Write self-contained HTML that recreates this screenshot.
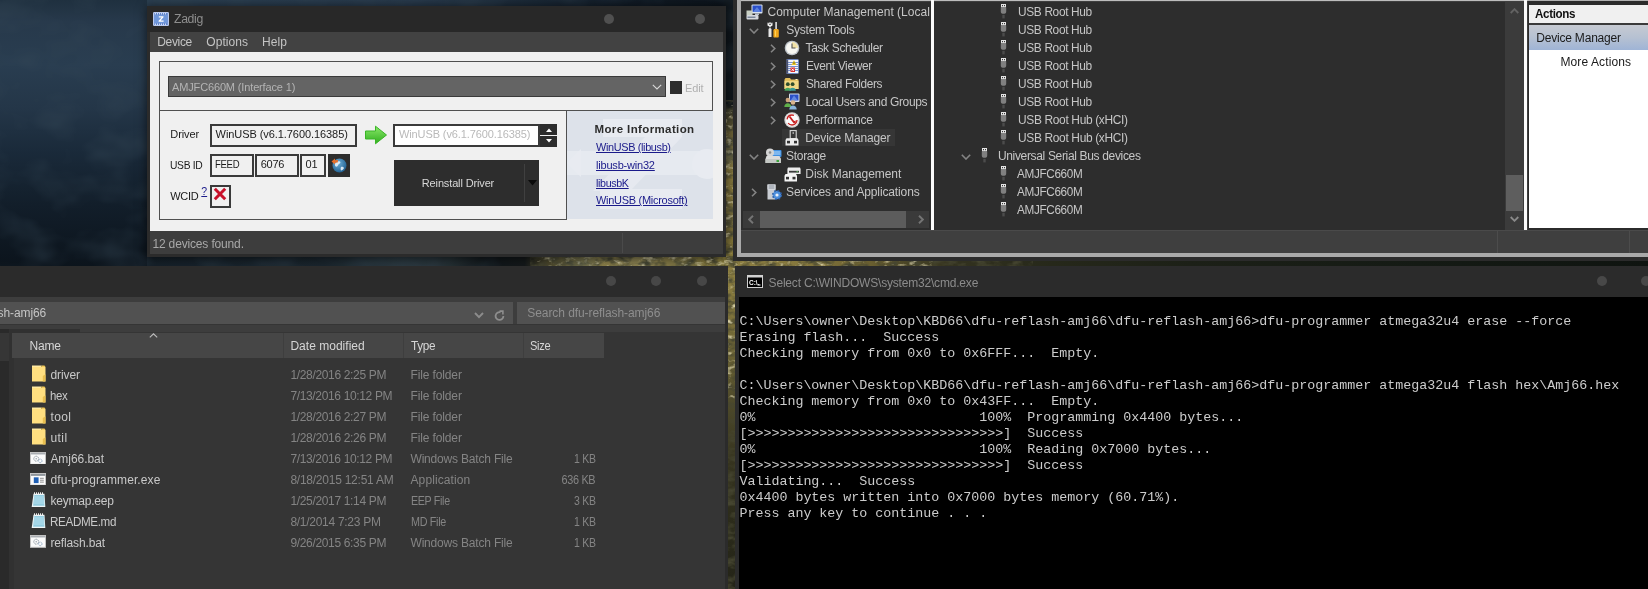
<!DOCTYPE html>
<html>
<head>
<meta charset="utf-8">
<title>Desktop</title>
<style>
*{box-sizing:border-box;margin:0;padding:0}
html,body{width:1648px;height:589px;overflow:hidden;background:#14191c}
body{position:relative;font-family:"Liberation Sans",sans-serif;font-size:12px;color:#ccc}
.a{position:absolute}
.t{position:absolute;white-space:nowrap;line-height:16px;height:16px}
/* ---------- wallpaper ---------- */
#wp-blue{left:0;top:0;width:740px;height:270px;background:linear-gradient(180deg,#1f303f 0%,#27394b 8%,#293d50 24%,#243648 40%,#1a2a3a 56%,#121e2a 76%,#0b131b 100%)}
#wp-topstrip{left:147px;top:0;width:600px;height:8px;background:linear-gradient(90deg,#2a3e50 0%,#27394b 45%,#1a2836 65%,#111b26 80%,#0c131a 100%)}
#wp-mid{left:147px;top:256px;width:590px;height:11px;background:linear-gradient(90deg,#152029 0%,#1a252d 30%,#2a383f 42%,#222c30 52%,#10161a 58%,#14181a 64%,#4a4528 68%,#857a44 74%,#8f8450 84%,#7a703c 92%,#90843f 100%)}
#wp-v1{left:724px;top:0;width:12px;height:270px;background:linear-gradient(180deg,#0e151b 0%,#0f161b 38%,#5f5630 46%,#8a7c40 60%,#7a6d36 85%,#95873f 100%)}
#wp-v2{left:726px;top:266px;width:12px;height:323px;background:linear-gradient(180deg,#8f8142 0%,#85783d 10%,#6e6535 26%,#4e4a2a 42%,#36341f 60%,#2a2a1a 82%,#242418 100%)}
#wp-r{left:733px;top:259px;width:915px;height:9px;background:linear-gradient(90deg,#8d7f42 0%,#84763c 8%,#6a5f30 15%,#4a4526 19%,#33321f 24%,#26281a 35%,#1c2017 50%,#141a14 75%,#0f1410 100%)}
.nzo{filter:url(#nzd);background:#000}
.nzo2{filter:url(#nzl);background:#000}
.nzo3{filter:url(#nzb);background:#000}
</style>
</head>
<body>
<div id="root" class="a" style="left:0;top:0;width:1648px;height:589px;will-change:transform">
<!-- wallpaper pieces -->
<svg id="nz" class="a" width="0" height="0" style="left:0;top:0"><defs>
<filter id="nzd" x="0" y="0" width="100%" height="100%"><feTurbulence type="fractalNoise" baseFrequency="0.09 0.16" numOctaves="3" seed="7"/><feColorMatrix type="matrix" values="0 0 0 0 0.060  0 0 0 0 0.060  0 0 0 0 0.030  2.600 0 0 0 -1.050"/></filter>
<filter id="nzl" x="0" y="0" width="100%" height="100%"><feTurbulence type="fractalNoise" baseFrequency="0.12 0.200" numOctaves="3" seed="21"/><feColorMatrix type="matrix" values="0 0 0 0 0.860  0 0 0 0 0.800  0 0 0 0 0.520  0 2.800 0 0 -1.550"/></filter>
<filter id="nzb" x="0" y="0" width="100%" height="100%"><feTurbulence type="fractalNoise" baseFrequency="0.020 0.030" numOctaves="3" seed="4"/><feColorMatrix type="matrix" values="0 0 0 0 0.040  0 0 0 0 0.070  0 0 0 0 0.100  0.800 0 0 0 -0.340"/></filter>
</defs></svg>

<div class="a" id="wp-blue"></div>
<div class="a" id="wp-topstrip"></div>
<div class="a" id="wp-mid"></div>
<div class="a" id="wp-v1"></div>
<div class="a" id="wp-v2"></div>
<div class="a" id="wp-r"></div>
<div class="a nzo" style="left:530px;top:256px;width:210px;height:12px"></div>
<div class="a nzo" style="left:724px;top:100px;width:14px;height:489px"></div>
<div class="a nzo" style="left:733px;top:258px;width:300px;height:10px"></div>
<div class="a nzo2" style="left:530px;top:256px;width:210px;height:12px"></div>
<div class="a nzo2" style="left:724px;top:100px;width:14px;height:300px"></div>
<div class="a nzo2" style="left:733px;top:258px;width:200px;height:10px"></div>
<div class="a nzo3" style="left:0;top:0;width:740px;height:270px"></div>


<div class="a" style="left:147px;top:6px;width:579px;height:250.5px;background:#2b2b2b;box-shadow:0 1px 9px 1px rgba(0,0,0,.55);"></div>
<div class="a" style="left:147px;top:6px;width:579px;height:26px;background:#282828;"></div>
<svg class="a" style="left:153px;top:12px" width="16" height="14" viewBox="0 0 16 14">
<rect x="0" y="0" width="16" height="14" rx="1.200" fill="#b9c9ee"/>
<rect x="1.300" y="1" width="13.400" height="12" fill="#5f84cc"/>
<path d="M2 1.800h12M2 12.200h12" stroke="#cfdcf6" stroke-width="1.600" stroke-dasharray="1 1"/>
<rect x="1.300" y="3" width="13.400" height="8" fill="#6f97da"/>
<path d="M5.800 4.300h4.700v1L7.600 8.500h3v1.200H5.600v-1L8.600 5.500H5.800z" fill="#fff"/>
</svg>
<span class="t" style="transform-origin:0 50%;top:11.2px;font-size:12.5px;color:#8e8e8e;line-height:16px;height:16px;left:174px;letter-spacing:-0.350px;transform:scaleX(0.9805);">Zadig</span>
<div class="a" style="left:604px;top:14px;width:10px;height:10px;background:#505050;border-radius:50%;"></div>
<div class="a" style="left:695px;top:14px;width:10px;height:10px;background:#505050;border-radius:50%;"></div>
<div class="a" style="left:150px;top:32px;width:573px;height:19.5px;background:#424242;"></div>
<span class="t" style="transform-origin:0 50%;top:33.8px;font-size:12px;color:#c4c4c4;line-height:16px;height:16px;left:157.2px;letter-spacing:-0.317px;">Device</span>
<span class="t" style="transform-origin:0 50%;top:33.8px;font-size:12px;color:#c4c4c4;line-height:16px;height:16px;left:206.3px;letter-spacing:0.057px;">Options</span>
<span class="t" style="transform-origin:0 50%;top:33.8px;font-size:12px;color:#c4c4c4;line-height:16px;height:16px;left:262px;letter-spacing:0.104px;">Help</span>
<div class="a" style="left:150px;top:51.5px;width:573px;height:179.5px;background:#f0f0f0;"></div>
<div class="a" style="left:159px;top:61px;width:554px;height:50px;border:1px solid #505050;"></div>
<div class="a" style="left:168px;top:76px;width:498px;height:21px;background:#646464;border:1px solid #3a3a3a;"></div>
<span class="t" style="transform-origin:0 50%;top:79.0px;font-size:11px;color:#b4b4b4;line-height:16px;height:16px;left:172px;letter-spacing:-0.143px;">AMJFC660M (Interface 1)</span>
<svg class="a" style="left:652px;top:84px" width="10" height="6" viewBox="0 0 10 6"><path d="M0.800 0.800l4.200 4.200 4.200-4.200" fill="none" stroke="#d8d8d8" stroke-width="1.100"/></svg>
<div class="a" style="left:669.5px;top:81px;width:12.5px;height:12.5px;background:#2d2d2d;"></div>
<span class="t" style="transform-origin:0 50%;top:80.0px;font-size:11px;color:#b0b0b0;line-height:16px;height:16px;left:685px;letter-spacing:-0.156px;">Edit</span>
<div class="a" style="left:159px;top:110px;width:408px;height:109.8px;border:1px solid #505050;"></div>
<div class="a" style="left:567px;top:111px;width:146px;height:108.3px;background:#dde2ea;overflow:hidden;"><svg width="146" height="107" viewBox="0 0 146 107" style="position:absolute;left:0;top:0">
<g fill="#e8ebf1">
<rect x="36" y="8" width="79" height="18"/>
<path d="M78 26h37l-52 54h-37z" opacity="0.800"/>
<rect x="33" y="78" width="82" height="20"/>
<rect x="0" y="40" width="146" height="24" opacity="0.850"/>
<path d="M0 52l14-14v28z"/>
<circle cx="140" cy="53" r="15"/>
</g></svg></div>
<span class="t" style="transform-origin:0 50%;top:121.0px;font-size:11.5px;color:#2c2c2c;line-height:16px;height:16px;left:594.5px;font-weight:bold;letter-spacing:0.379px;">More Information</span>
<span class="t" style="transform-origin:0 50%;top:139.0px;font-size:11px;color:#1a1a8a;line-height:16px;height:16px;left:596px;text-decoration:underline;letter-spacing:-0.350px;transform:scaleX(0.9896);">WinUSB (libusb)</span>
<span class="t" style="transform-origin:0 50%;top:157.2px;font-size:11px;color:#1a1a8a;line-height:16px;height:16px;left:596px;text-decoration:underline;letter-spacing:-0.196px;">libusb-win32</span>
<span class="t" style="transform-origin:0 50%;top:175.4px;font-size:11px;color:#1a1a8a;line-height:16px;height:16px;left:596px;text-decoration:underline;letter-spacing:-0.350px;transform:scaleX(0.9712);">libusbK</span>
<span class="t" style="transform-origin:0 50%;top:192.4px;font-size:11px;color:#1a1a8a;line-height:16px;height:16px;left:596px;text-decoration:underline;letter-spacing:-0.286px;">WinUSB (Microsoft)</span>
<span class="t" style="transform-origin:0 50%;top:126.0px;font-size:11px;color:#1a1a1a;line-height:16px;height:16px;left:170.3px;letter-spacing:-0.089px;">Driver</span>
<div class="a" style="left:210px;top:124px;width:147px;height:22.7px;background:#f0f0f0;border:2px solid #3a3a3a;"></div>
<span class="t" style="transform-origin:0 50%;top:125.8px;font-size:11px;color:#1a1a1a;line-height:16px;height:16px;left:215.6px;letter-spacing:-0.071px;">WinUSB (v6.1.7600.16385)</span>
<svg class="a" style="left:364px;top:125.400px" width="24" height="20" viewBox="0 0 24 20">
<defs><linearGradient id="ga" x1="0" y1="0" x2="0" y2="1"><stop offset="0" stop-color="#8be86a"/><stop offset="1" stop-color="#2faf1e"/></linearGradient></defs>
<path d="M1.5 6h10V1.2L22.5 10 11.5 18.8V14h-10z" fill="url(#ga)" stroke="#39b526" stroke-width="1"/></svg>
<div class="a" style="left:393px;top:124px;width:146.5px;height:22.7px;background:#ffffff;border:2px solid #3a3a3a;"></div>
<span class="t" style="transform-origin:0 50%;top:125.8px;font-size:11px;color:#b9b9b9;line-height:16px;height:16px;left:399px;letter-spacing:-0.110px;">WinUSB (v6.1.7600.16385)</span>
<div class="a" style="left:539.5px;top:124px;width:17.7px;height:22.7px;background:#2d2d2d;"></div>
<div class="a" style="left:539.5px;top:135px;width:18px;height:1px;background:#f0f0f0;"></div>
<svg class="a" style="left:544.5px;top:128px" width="8" height="15" viewBox="0 0 8 15"><path d="M4 0.5L7 4H1z M1 11h6L4 14.5z" fill="#fff"/></svg>
<span class="t" style="transform-origin:0 50%;top:157.0px;font-size:11px;color:#1a1a1a;line-height:16px;height:16px;left:170.3px;letter-spacing:-0.350px;transform:scaleX(0.9360);">USB ID</span>
<div class="a" style="left:210px;top:154px;width:43.5px;height:22.5px;background:#f0f0f0;border:2px solid #3a3a3a;"></div>
<span class="t" style="transform-origin:0 50%;top:156.2px;font-size:11px;color:#1a1a1a;line-height:16px;height:16px;left:215px;letter-spacing:-0.350px;transform:scaleX(0.8694);">FEED</span>
<div class="a" style="left:255px;top:154px;width:43.5px;height:22.5px;background:#f0f0f0;border:2px solid #3a3a3a;"></div>
<span class="t" style="transform-origin:0 50%;top:156.2px;font-size:11px;color:#1a1a1a;line-height:16px;height:16px;left:260.7px;letter-spacing:-0.261px;">6076</span>
<div class="a" style="left:300.3px;top:154px;width:25.3px;height:22.5px;background:#f0f0f0;border:2px solid #3a3a3a;"></div>
<span class="t" style="transform-origin:0 50%;top:156.2px;font-size:11px;color:#1a1a1a;line-height:16px;height:16px;left:305.4px;letter-spacing:-0.050px;">01</span>
<div class="a" style="left:328px;top:154px;width:22px;height:22.5px;background:#2d2d2d;"></div>
<svg class="a" style="left:331px;top:157px" width="16" height="16" viewBox="0 0 16 16">
<defs><radialGradient id="gl" cx="0.4" cy="0.35" r="0.7"><stop offset="0" stop-color="#6fb0d8"/><stop offset="1" stop-color="#1d5d8f"/></radialGradient></defs>
<circle cx="8.5" cy="8.5" r="7" fill="url(#gl)"/>
<path d="M4 7c1-2 3-3 5-2.5 1 1 0 2-1 2.5s-1 2-2 2.5S3.5 9 4 7z M10 10c1-.5 2.5 0 3 1-.5 1.500-2 2.500-3 2.500-.5-1-.5-2.500 0-3.500z" fill="#e8f2fa" opacity=".9"/>
<path d="M0.500 4.500L4 1.500v1.800l3-.3-.3 2.500-2.700.2v1.800z" fill="#e8702a"/>
</svg>
<span class="t" style="transform-origin:0 50%;top:188.0px;font-size:11px;color:#1a1a1a;line-height:16px;height:16px;left:170.3px;letter-spacing:-0.343px;">WCID</span>
<span class="t" style="transform-origin:0 50%;top:182.8px;font-size:10.5px;color:#1a1a8a;line-height:16px;height:16px;left:201.3px;text-decoration:underline;">?</span>
<div class="a" style="left:210px;top:185px;width:20.8px;height:22.5px;background:#f0f0f0;border:2px solid #3a3a3a;"></div>
<svg class="a" style="left:213.400px;top:187.300px" width="14" height="14" viewBox="0 0 14 14"><path d="M1.800 1.800l10.400 10.400M12.200 1.800L1.800 12.200" stroke="#c8102a" stroke-width="3" stroke-linecap="butt"/></svg>
<div class="a" style="left:394px;top:160px;width:145px;height:45.5px;background:#2d2d2d;"></div>
<div class="a" style="left:524px;top:164px;width:1px;height:38px;background:#404040;"></div>
<span class="t" style="transform-origin:0 50%;top:175.0px;font-size:11px;color:#d8d8d8;line-height:16px;height:16px;left:421.8px;letter-spacing:-0.139px;">Reinstall Driver</span>
<svg class="a" style="left:527.500px;top:180px" width="9" height="6" viewBox="0 0 9 6"><path d="M0 0h9L4.500 5.500z" fill="#0a0a0a"/></svg>
<div class="a" style="left:150px;top:231px;width:573px;height:22.5px;background:#3d3d3d;"></div>
<div class="a" style="left:622px;top:233px;width:1px;height:20px;background:#4a4a4a;"></div>
<span class="t" style="transform-origin:0 50%;top:235.5px;font-size:12px;color:#a8a8a8;line-height:16px;height:16px;left:152.4px;letter-spacing:-0.155px;">12 devices found.</span>

<div class="a" style="left:733px;top:0px;width:915px;height:261.2px;background:#2b2b2b;"></div>
<div class="a" style="left:737px;top:0px;width:911px;height:257.2px;background:#a9a9a9;"></div>
<div class="a" style="left:741px;top:0px;width:907px;height:253.2px;background:#3f3f3f;"></div>
<div class="a" style="left:741px;top:0px;width:907px;height:1px;background:#bdbdbd;"></div>
<div class="a" style="left:741px;top:1.5px;width:189.5px;height:228px;background:#2d2d2d;"></div>
<div class="a" style="left:930.5px;top:0px;width:3.3px;height:229.5px;background:#fafafa;"></div>
<div class="a" style="left:933.8px;top:1.5px;width:590.4px;height:228px;background:#2d2d2d;"></div>
<div class="a" style="left:1504.8px;top:1.5px;width:19.4px;height:228px;background:#3b3b3b;"></div>
<div class="a" style="left:1505.5px;top:175px;width:17.5px;height:36px;background:#5e5e5e;"></div>
<svg class="a" style="left:1510px;top:8px" width="9" height="6" viewBox="0 0 9 6"><path d="M0.700 5L4.500 1.200 8.300 5" fill="none" stroke="#636363" stroke-width="1.900"/></svg>
<svg class="a" style="left:1510px;top:216px" width="9" height="6" viewBox="0 0 9 6"><path d="M0.700 1L4.500 4.800 8.300 1" fill="none" stroke="#8a8a8a" stroke-width="1.800"/></svg>
<div class="a" style="left:1524.2px;top:0px;width:3.3px;height:229.5px;background:#fafafa;"></div>
<div class="a" style="left:1527.5px;top:0px;width:120.5px;height:229.5px;background:#2b2b2b;"></div>
<div class="a" style="left:1529px;top:5px;width:119px;height:223px;background:#ffffff;"></div>
<div class="a" style="left:1529px;top:5px;width:119px;height:18px;background:#f0f0f0;"></div>
<div class="a" style="left:1529px;top:23px;width:119px;height:1.7px;background:#3a3a3a;"></div>
<div class="a" style="left:1529px;top:24.7px;width:119px;height:25px;background:linear-gradient(180deg,#c6cad2 0%,#b6c1d2 50%,#9fb4d6 100%);"></div>
<div class="a" style="left:1527.5px;top:0px;width:120.5px;height:1px;background:#b0b0b0;"></div>
<span class="t" style="transform-origin:0 50%;top:5.8px;font-size:12px;color:#111;line-height:16px;height:16px;left:1534.5px;font-weight:bold;letter-spacing:-0.350px;transform:scaleX(0.9662);">Actions</span>
<span class="t" style="transform-origin:0 50%;top:29.6px;font-size:12px;color:#1a1a1a;line-height:16px;height:16px;left:1536.3px;letter-spacing:-0.206px;">Device Manager</span>
<span class="t" style="transform-origin:0 50%;top:53.9px;font-size:12px;color:#1a1a1a;line-height:16px;height:16px;left:1560.4px;letter-spacing:0.111px;">More Actions</span>
<div class="a" style="left:741px;top:229.5px;width:907px;height:1px;background:#4a4a4a;"></div>
<div class="a" style="left:1496.5px;top:231px;width:1px;height:22px;background:#4c4c4c;"></div>
<div class="a" style="left:1629px;top:231px;width:1px;height:22px;background:#4c4c4c;"></div>
<svg class="a" style="left:746px;top:4.0px" width="17" height="16" viewBox="0 0 17 16">
<rect x="5.500" y="0.500" width="11" height="9" rx="1" fill="#d9e2ee"/><rect x="6.500" y="1.500" width="9" height="6.500" fill="#2a4fc8"/>
<path d="M7 8l4-5 4 5z" fill="#6f97ea" opacity=".7"/>
<rect x="9" y="9.500" width="4" height="1.500" fill="#b8c0cc"/>
<rect x="0.500" y="6.500" width="6" height="5" fill="#c9d0c4"/>
<rect x="0.500" y="11" width="12" height="4.500" rx="1" fill="#d6d9de"/><rect x="1.500" y="12.500" width="8" height="1.500" fill="#7b8799"/>
</svg>
<div class="a" style="left:767.500px;top:0;width:162.800px;height:24px;overflow:hidden"><span class="t" style="transform-origin:0 50%;top:3.7px;font-size:12px;color:#c6c6c6;line-height:16px;height:16px;left:0px;letter-spacing:0.009px;">Computer Management (Local)</span>
</div>
<svg class="a" style="left:748.7px;top:28.2px" width="10" height="6" viewBox="0 0 10 6"><path d="M0.800 0.800L5 5 9.200 0.800" fill="none" stroke="#848484" stroke-width="1.600"/></svg>
<svg class="a" style="left:767px;top:22.0px" width="13" height="16" viewBox="0 0 13 16">
<path d="M1.500 0.500l1.200 2v3.500l-1.200 1V15h3V7L3.300 6V2.500l1.200-2z" fill="#e6e6e6"/><path d="M0.500 0.500v3l2.500 1.500 2.500-1.500v-3l-1.500 1v1.500h-2V1.500z" fill="#f2f2f2"/>
<rect x="8.300" y="0" width="1.600" height="7" fill="#e0e0e0"/><path d="M7 7h4.200l.6 1.500v6c0 .6-.5 1-1 1H7.400c-.6 0-1-.4-1-1v-6z" fill="#f2a81c"/><rect x="8" y="8.500" width="1" height="6" fill="#ffd257"/>
</svg>
<span class="t" style="transform-origin:0 50%;top:21.7px;font-size:12px;color:#c6c6c6;line-height:16px;height:16px;left:786.3px;letter-spacing:-0.249px;">System Tools</span>
<svg class="a" style="left:770.3px;top:43.5px" width="6" height="9" viewBox="0 0 6 9"><path d="M1 0.800L4.800 4.500 1 8.200" fill="none" stroke="#848484" stroke-width="1.600"/></svg>
<svg class="a" style="left:784px;top:40.1px" width="16" height="16" viewBox="0 0 16 16">
<circle cx="8" cy="8" r="7.300" fill="#bfc4c9"/><circle cx="8" cy="8" r="6" fill="#f7f7f2"/>
<path d="M8 8V2a6 6 0 0 1 6 6z" fill="#f2e3a8"/>
<path d="M8 3.500V8h3.500" fill="none" stroke="#555" stroke-width="1.100"/></svg>
<span class="t" style="transform-origin:0 50%;top:39.7px;font-size:12px;color:#c6c6c6;line-height:16px;height:16px;left:805.5px;letter-spacing:-0.350px;">Task Scheduler</span>
<svg class="a" style="left:770.3px;top:61.5px" width="6" height="9" viewBox="0 0 6 9"><path d="M1 0.800L4.800 4.500 1 8.200" fill="none" stroke="#848484" stroke-width="1.600"/></svg>
<svg class="a" style="left:785px;top:58.60000000000001px" width="14" height="15" viewBox="0 0 14 15">
<rect x="1.500" y="0.500" width="12" height="14" rx="1" fill="#f4f6fa" stroke="#6f88c0" stroke-width="1"/><rect x="1" y="0.500" width="2.200" height="14" fill="#4a5578"/>
<path d="M3 3.500h10M3 5.500h10M3 7.500h10M3 9.500h10M3 11.500h10" stroke="#5a78c0" stroke-width=".8"/>
<path d="M1 2h2M1 4h2M1 6h2M1 8h2M1 10h2M1 12h2" stroke="#556" stroke-width=".8"/>
<path d="M9 1.300l2.600 4.700H6.400z" fill="#f1cc2a"/><rect x="8.600" y="2.800" width=".800" height="2.400" fill="#5a4a10"/><rect x="5.500" y="8.500" width="4.500" height="4.500" fill="#d93030"/><path d="M6.600 9.600l2.300 2.300M8.900 9.600l-2.300 2.300" stroke="#fff" stroke-width=".9"/>
</svg>
<span class="t" style="transform-origin:0 50%;top:57.7px;font-size:12px;color:#c6c6c6;line-height:16px;height:16px;left:805.5px;letter-spacing:-0.350px;transform:scaleX(0.9935);">Event Viewer</span>
<svg class="a" style="left:770.3px;top:79.5px" width="6" height="9" viewBox="0 0 6 9"><path d="M1 0.800L4.800 4.500 1 8.200" fill="none" stroke="#848484" stroke-width="1.600"/></svg>
<svg class="a" style="left:784px;top:77.10000000000001px" width="15" height="15" viewBox="0 0 15 15">
<path d="M0.500 2.500l1-1.500h4.500l1 1.500h7.500v9.500H0.500z" fill="#e2bd5a"/><rect x="0.500" y="3.800" width="14" height="8.200" fill="#f1d884"/>
<rect x="11.500" y="2" width="2" height="1" fill="#fff3c4"/>
<circle cx="3.800" cy="7.200" r="1.900" fill="#2f4d2c"/><circle cx="8.600" cy="7.200" r="1.900" fill="#2f4d2c"/>
<path d="M0.500 13.800c0-4 6.600-4 6.600 0z" fill="#46a35c"/><path d="M5.300 13.800c0-4 6.600-4 6.600 0z" fill="#3a9a96"/></svg>
<span class="t" style="transform-origin:0 50%;top:75.7px;font-size:12px;color:#c6c6c6;line-height:16px;height:16px;left:805.5px;letter-spacing:-0.350px;transform:scaleX(0.9858);">Shared Folders</span>
<svg class="a" style="left:770.3px;top:97.5px" width="6" height="9" viewBox="0 0 6 9"><path d="M1 0.800L4.800 4.500 1 8.200" fill="none" stroke="#848484" stroke-width="1.600"/></svg>
<svg class="a" style="left:784px;top:93.2px" width="16" height="17" viewBox="0 0 16 17">
<rect x="5" y="0.500" width="10.500" height="8.500" rx="1" fill="#d6deea"/><rect x="6" y="1.500" width="8.500" height="6" fill="#2b50c6"/><path d="M7 7l3-4.500 3.500 4.500z" fill="#7aa0ee" opacity=".7"/>
<circle cx="3.800" cy="7" r="2.200" fill="#caa27a"/><path d="M0.300 14c0-5 7-5 7 0z" fill="#5fb04a"/>
<circle cx="9" cy="9.500" r="2.300" fill="#d9b48c"/><path d="M5.300 16.500c0-5.500 7.400-5.500 7.400 0z" fill="#8ab6dc"/></svg>
<span class="t" style="transform-origin:0 50%;top:93.7px;font-size:12px;color:#c6c6c6;line-height:16px;height:16px;left:805.5px;letter-spacing:-0.348px;">Local Users and Groups</span>
<svg class="a" style="left:770.3px;top:115.5px" width="6" height="9" viewBox="0 0 6 9"><path d="M1 0.800L4.800 4.500 1 8.200" fill="none" stroke="#848484" stroke-width="1.600"/></svg>
<svg class="a" style="left:784px;top:112.10000000000001px" width="16" height="16" viewBox="0 0 16 16">
<circle cx="8" cy="8" r="7.700" fill="#d8d8d8"/><circle cx="8" cy="8" r="6.300" fill="#fbfbfb"/>
<circle cx="8" cy="8" r="5" fill="none" stroke="#c62020" stroke-width="1.300" stroke-dasharray="12 4 9 6.400"/>
<path d="M5.500 4.500l5 6.500" stroke="#c62020" stroke-width="1.800"/><path d="M9 9.500l2.500 2 .3-3z" fill="#c62020"/></svg>
<span class="t" style="transform-origin:0 50%;top:111.7px;font-size:12px;color:#c6c6c6;line-height:16px;height:16px;left:805.5px;letter-spacing:-0.120px;">Performance</span>
<div class="a" style="left:782px;top:129px;width:112.5px;height:17px;background:#363636;"></div>
<svg class="a" style="left:785px;top:129.89999999999998px" width="14" height="16" viewBox="0 0 14 16">
<rect x="5.200" y="0.600" width="6" height="8" fill="none" stroke="#d8d8d8" stroke-width="1.100"/><rect x="7.600" y="2.200" width="1.200" height="1.600" fill="#d8d8d8"/>
<path d="M1.500 8.200h11l1 1.800v5.500H0.500V10z" fill="#ececec"/><rect x="2" y="10.800" width="3" height="2.600" fill="#333"/><rect x="9" y="10.800" width="3" height="2.600" fill="#333"/></svg>
<span class="t" style="transform-origin:0 50%;top:129.7px;font-size:12px;color:#c6c6c6;line-height:16px;height:16px;left:805.3px;letter-spacing:-0.160px;">Device Manager</span>
<svg class="a" style="left:748.7px;top:154.2px" width="10" height="6" viewBox="0 0 10 6"><path d="M0.800 0.800L5 5 9.200 0.800" fill="none" stroke="#848484" stroke-width="1.600"/></svg>
<svg class="a" style="left:765px;top:148.0px" width="17" height="16" viewBox="0 0 17 16">
<rect x="6" y="2" width="10.500" height="7" rx="1" fill="#3f8fe0"/><path d="M7 4h8.500M7 6h8.500" stroke="#bfe0ff" stroke-width="1"/>
<circle cx="5" cy="4.500" r="4" fill="#d4d4d4"/><circle cx="5" cy="4.500" r="1.300" fill="#888"/>
<path d="M1.500 8h13l1.500 3v4H0.500v-4z" fill="#dcdcdc"/><rect x="0.500" y="11" width="15.500" height="4" fill="#c4c8c4"/><rect x="11.500" y="12" width="2.500" height="2" fill="#3da33d"/></svg>
<span class="t" style="transform-origin:0 50%;top:147.7px;font-size:12px;color:#c6c6c6;line-height:16px;height:16px;left:786px;letter-spacing:-0.289px;">Storage</span>
<svg class="a" style="left:783.8px;top:166.7px" width="17" height="15" viewBox="0 0 17 15">
<path d="M4 0.500h12l.6 1.500v5H3.400V2z" fill="#ededed"/><rect x="5" y="3.800" width="10" height="1.800" fill="#3a3a3a"/><rect x="12.500" y="4.200" width="1.500" height="1" fill="#5ab85a"/>
<path d="M1.500 7h10.500l1 1.800V14.500H0.500V8.800z" fill="#f4f4f4"/><rect x="2" y="9.800" width="3" height="2.600" fill="#333"/><rect x="8.500" y="9.800" width="3" height="2.600" fill="#333"/></svg>
<span class="t" style="transform-origin:0 50%;top:165.7px;font-size:12px;color:#c6c6c6;line-height:16px;height:16px;left:805.3px;letter-spacing:-0.051px;">Disk Management</span>
<svg class="a" style="left:751px;top:187.5px" width="6" height="9" viewBox="0 0 6 9"><path d="M1 0.800L4.800 4.500 1 8.200" fill="none" stroke="#848484" stroke-width="1.600"/></svg>
<svg class="a" style="left:767px;top:184.0px" width="15" height="16" viewBox="0 0 15 16">
<rect x="0.500" y="0.500" width="8" height="15" fill="#c9cdd3"/><rect x="0.500" y="0.500" width="8" height="5" fill="#e2e5e9"/><path d="M1.500 2h6M1.500 4h6" stroke="#7c8490" stroke-width="1"/>
<circle cx="10" cy="11" r="4.300" fill="#4d8fdc"/><circle cx="10" cy="11" r="4.300" fill="none" stroke="#2d5fa8" stroke-width="1.600" stroke-dasharray="1.700 1.680"/><circle cx="10" cy="11" r="1.600" fill="#e8f0fa"/></svg>
<span class="t" style="transform-origin:0 50%;top:183.7px;font-size:12px;color:#c6c6c6;line-height:16px;height:16px;left:786px;letter-spacing:-0.127px;">Services and Applications</span>
<div class="a" style="left:743px;top:211px;width:186px;height:17px;background:#3a3a3a;"></div>
<div class="a" style="left:760px;top:211px;width:146px;height:17px;background:#5c5c5c;"></div>
<svg class="a" style="left:748px;top:215px" width="6" height="9" viewBox="0 0 6 9"><path d="M5 0.800L1.200 4.500 5 8.200" fill="none" stroke="#747474" stroke-width="1.900"/></svg>
<svg class="a" style="left:917.500px;top:215px" width="6" height="9" viewBox="0 0 6 9"><path d="M1 0.800L4.800 4.500 1 8.200" fill="none" stroke="#747474" stroke-width="1.900"/></svg>
<svg class="a" style="left:1000.2px;top:4.199999999999999px" width="7" height="15" viewBox="0 0 7 15">
<rect x="1" y="0" width="5" height="3.500" fill="#e4e4e4"/><rect x="2" y="1" width="1" height="1.200" fill="#3a3a3a"/><rect x="4" y="1" width="1" height="1.200" fill="#3a3a3a"/>
<path d="M0.800 3.500h5.400v4.300c0 1.200-.9 2-1.800 2h-1.800c-.9 0-1.800-.8-1.800-2z" fill="#808080"/>
<rect x="2.300" y="10.800" width="2.400" height="3.600" fill="#4c4c4c"/></svg>
<span class="t" style="transform-origin:0 50%;top:3.7px;font-size:12px;color:#c6c6c6;line-height:16px;height:16px;left:1017.6px;letter-spacing:-0.350px;transform:scaleX(0.9913);">USB Root Hub</span>
<svg class="a" style="left:1000.2px;top:22.2px" width="7" height="15" viewBox="0 0 7 15">
<rect x="1" y="0" width="5" height="3.500" fill="#e4e4e4"/><rect x="2" y="1" width="1" height="1.200" fill="#3a3a3a"/><rect x="4" y="1" width="1" height="1.200" fill="#3a3a3a"/>
<path d="M0.800 3.500h5.400v4.300c0 1.200-.9 2-1.800 2h-1.800c-.9 0-1.800-.8-1.800-2z" fill="#808080"/>
<rect x="2.300" y="10.800" width="2.400" height="3.600" fill="#4c4c4c"/></svg>
<span class="t" style="transform-origin:0 50%;top:21.7px;font-size:12px;color:#c6c6c6;line-height:16px;height:16px;left:1017.6px;letter-spacing:-0.350px;transform:scaleX(0.9913);">USB Root Hub</span>
<svg class="a" style="left:1000.2px;top:40.2px" width="7" height="15" viewBox="0 0 7 15">
<rect x="1" y="0" width="5" height="3.500" fill="#e4e4e4"/><rect x="2" y="1" width="1" height="1.200" fill="#3a3a3a"/><rect x="4" y="1" width="1" height="1.200" fill="#3a3a3a"/>
<path d="M0.800 3.500h5.400v4.300c0 1.200-.9 2-1.800 2h-1.800c-.9 0-1.800-.8-1.800-2z" fill="#808080"/>
<rect x="2.300" y="10.800" width="2.400" height="3.600" fill="#4c4c4c"/></svg>
<span class="t" style="transform-origin:0 50%;top:39.7px;font-size:12px;color:#c6c6c6;line-height:16px;height:16px;left:1017.6px;letter-spacing:-0.350px;transform:scaleX(0.9913);">USB Root Hub</span>
<svg class="a" style="left:1000.2px;top:58.2px" width="7" height="15" viewBox="0 0 7 15">
<rect x="1" y="0" width="5" height="3.500" fill="#e4e4e4"/><rect x="2" y="1" width="1" height="1.200" fill="#3a3a3a"/><rect x="4" y="1" width="1" height="1.200" fill="#3a3a3a"/>
<path d="M0.800 3.500h5.400v4.300c0 1.200-.9 2-1.800 2h-1.800c-.9 0-1.800-.8-1.800-2z" fill="#808080"/>
<rect x="2.300" y="10.800" width="2.400" height="3.600" fill="#4c4c4c"/></svg>
<span class="t" style="transform-origin:0 50%;top:57.7px;font-size:12px;color:#c6c6c6;line-height:16px;height:16px;left:1017.6px;letter-spacing:-0.350px;transform:scaleX(0.9913);">USB Root Hub</span>
<svg class="a" style="left:1000.2px;top:76.2px" width="7" height="15" viewBox="0 0 7 15">
<rect x="1" y="0" width="5" height="3.500" fill="#e4e4e4"/><rect x="2" y="1" width="1" height="1.200" fill="#3a3a3a"/><rect x="4" y="1" width="1" height="1.200" fill="#3a3a3a"/>
<path d="M0.800 3.500h5.400v4.300c0 1.200-.9 2-1.800 2h-1.800c-.9 0-1.800-.8-1.800-2z" fill="#808080"/>
<rect x="2.300" y="10.800" width="2.400" height="3.600" fill="#4c4c4c"/></svg>
<span class="t" style="transform-origin:0 50%;top:75.7px;font-size:12px;color:#c6c6c6;line-height:16px;height:16px;left:1017.6px;letter-spacing:-0.350px;transform:scaleX(0.9913);">USB Root Hub</span>
<svg class="a" style="left:1000.2px;top:94.2px" width="7" height="15" viewBox="0 0 7 15">
<rect x="1" y="0" width="5" height="3.500" fill="#e4e4e4"/><rect x="2" y="1" width="1" height="1.200" fill="#3a3a3a"/><rect x="4" y="1" width="1" height="1.200" fill="#3a3a3a"/>
<path d="M0.800 3.500h5.400v4.300c0 1.200-.9 2-1.800 2h-1.800c-.9 0-1.800-.8-1.800-2z" fill="#808080"/>
<rect x="2.300" y="10.800" width="2.400" height="3.600" fill="#4c4c4c"/></svg>
<span class="t" style="transform-origin:0 50%;top:93.7px;font-size:12px;color:#c6c6c6;line-height:16px;height:16px;left:1017.6px;letter-spacing:-0.350px;transform:scaleX(0.9913);">USB Root Hub</span>
<svg class="a" style="left:1000.2px;top:112.2px" width="7" height="15" viewBox="0 0 7 15">
<rect x="1" y="0" width="5" height="3.500" fill="#e4e4e4"/><rect x="2" y="1" width="1" height="1.200" fill="#3a3a3a"/><rect x="4" y="1" width="1" height="1.200" fill="#3a3a3a"/>
<path d="M0.800 3.500h5.400v4.300c0 1.200-.9 2-1.800 2h-1.800c-.9 0-1.800-.8-1.800-2z" fill="#808080"/>
<rect x="2.300" y="10.800" width="2.400" height="3.600" fill="#4c4c4c"/></svg>
<span class="t" style="transform-origin:0 50%;top:111.7px;font-size:12px;color:#c6c6c6;line-height:16px;height:16px;left:1017.6px;letter-spacing:-0.350px;transform:scaleX(0.9963);">USB Root Hub (xHCI)</span>
<svg class="a" style="left:1000.2px;top:130.2px" width="7" height="15" viewBox="0 0 7 15">
<rect x="1" y="0" width="5" height="3.500" fill="#e4e4e4"/><rect x="2" y="1" width="1" height="1.200" fill="#3a3a3a"/><rect x="4" y="1" width="1" height="1.200" fill="#3a3a3a"/>
<path d="M0.800 3.500h5.400v4.300c0 1.200-.9 2-1.800 2h-1.800c-.9 0-1.800-.8-1.800-2z" fill="#808080"/>
<rect x="2.300" y="10.800" width="2.400" height="3.600" fill="#4c4c4c"/></svg>
<span class="t" style="transform-origin:0 50%;top:129.7px;font-size:12px;color:#c6c6c6;line-height:16px;height:16px;left:1017.6px;letter-spacing:-0.350px;transform:scaleX(0.9963);">USB Root Hub (xHCI)</span>
<svg class="a" style="left:960.8px;top:154.2px" width="10" height="6" viewBox="0 0 10 6"><path d="M0.800 0.800L5 5 9.200 0.800" fill="none" stroke="#848484" stroke-width="1.600"/></svg>
<svg class="a" style="left:980.6px;top:148.2px" width="7" height="15" viewBox="0 0 7 15">
<rect x="1" y="0" width="5" height="3.500" fill="#e4e4e4"/><rect x="2" y="1" width="1" height="1.200" fill="#3a3a3a"/><rect x="4" y="1" width="1" height="1.200" fill="#3a3a3a"/>
<path d="M0.800 3.500h5.400v4.300c0 1.200-.9 2-1.800 2h-1.800c-.9 0-1.800-.8-1.800-2z" fill="#808080"/>
<rect x="2.300" y="10.800" width="2.400" height="3.600" fill="#4c4c4c"/></svg>
<span class="t" style="transform-origin:0 50%;top:147.7px;font-size:12px;color:#c6c6c6;line-height:16px;height:16px;left:997.9px;letter-spacing:-0.336px;">Universal Serial Bus devices</span>
<svg class="a" style="left:1000.2px;top:166.2px" width="7" height="15" viewBox="0 0 7 15">
<rect x="1" y="0" width="5" height="3.500" fill="#e4e4e4"/><rect x="2" y="1" width="1" height="1.200" fill="#3a3a3a"/><rect x="4" y="1" width="1" height="1.200" fill="#3a3a3a"/>
<path d="M0.800 3.500h5.400v4.300c0 1.200-.9 2-1.800 2h-1.800c-.9 0-1.800-.8-1.800-2z" fill="#808080"/>
<rect x="2.300" y="10.800" width="2.400" height="3.600" fill="#4c4c4c"/></svg>
<span class="t" style="transform-origin:0 50%;top:165.7px;font-size:12px;color:#c6c6c6;line-height:16px;height:16px;left:1017px;letter-spacing:-0.350px;transform:scaleX(0.9775);">AMJFC660M</span>
<svg class="a" style="left:1000.2px;top:184.2px" width="7" height="15" viewBox="0 0 7 15">
<rect x="1" y="0" width="5" height="3.500" fill="#e4e4e4"/><rect x="2" y="1" width="1" height="1.200" fill="#3a3a3a"/><rect x="4" y="1" width="1" height="1.200" fill="#3a3a3a"/>
<path d="M0.800 3.500h5.400v4.300c0 1.200-.9 2-1.800 2h-1.800c-.9 0-1.800-.8-1.800-2z" fill="#808080"/>
<rect x="2.300" y="10.800" width="2.400" height="3.600" fill="#4c4c4c"/></svg>
<span class="t" style="transform-origin:0 50%;top:183.7px;font-size:12px;color:#c6c6c6;line-height:16px;height:16px;left:1017px;letter-spacing:-0.350px;transform:scaleX(0.9775);">AMJFC660M</span>
<svg class="a" style="left:1000.2px;top:202.2px" width="7" height="15" viewBox="0 0 7 15">
<rect x="1" y="0" width="5" height="3.500" fill="#e4e4e4"/><rect x="2" y="1" width="1" height="1.200" fill="#3a3a3a"/><rect x="4" y="1" width="1" height="1.200" fill="#3a3a3a"/>
<path d="M0.800 3.500h5.400v4.300c0 1.200-.9 2-1.800 2h-1.800c-.9 0-1.800-.8-1.800-2z" fill="#808080"/>
<rect x="2.300" y="10.800" width="2.400" height="3.600" fill="#4c4c4c"/></svg>
<span class="t" style="transform-origin:0 50%;top:201.7px;font-size:12px;color:#c6c6c6;line-height:16px;height:16px;left:1017px;letter-spacing:-0.350px;transform:scaleX(0.9775);">AMJFC660M</span>

<div class="a" style="left:0px;top:266px;width:728px;height:323px;background:#2b2b2b;"></div>
<div class="a" style="left:606px;top:276px;width:10px;height:10px;background:#474747;border-radius:50%;filter:blur(0.400px);"></div>
<div class="a" style="left:651px;top:276px;width:10px;height:10px;background:#474747;border-radius:50%;filter:blur(0.400px);"></div>
<div class="a" style="left:697px;top:276px;width:10px;height:10px;background:#474747;border-radius:50%;filter:blur(0.400px);"></div>
<div class="a" style="left:0px;top:297px;width:725px;height:35px;background:#3d3d3d;"></div>
<div class="a" style="left:0px;top:301.5px;width:512.5px;height:22.5px;background:#515151;"></div>
<span class="t" style="transform-origin:100% 50%;top:305.3px;font-size:12px;color:#c4c4c4;line-height:16px;height:16px;right:1601.8px;letter-spacing:-0.086px;">dfu-reflash-amj66</span>
<svg class="a" style="left:474px;top:311.700px" width="10" height="7" viewBox="0 0 10 7"><path d="M1 1l4 4.200 4-4.200" fill="none" stroke="#8c8c8c" stroke-width="1.900"/></svg>
<svg class="a" style="left:493.600px;top:308.500px" width="11" height="12" viewBox="0 0 11 12"><path d="M6.500 3.300A3.900 3.900 0 1 0 9.400 7" fill="none" stroke="#8e8e8e" stroke-width="1.800"/><path d="M5.500 1.300h4.200v4.200h-1.600v-2.600h-2.600z" fill="#8e8e8e"/></svg>
<div class="a" style="left:516.5px;top:301.5px;width:208.5px;height:22.5px;background:#515151;"></div>
<span class="t" style="transform-origin:0 50%;top:305.3px;font-size:12px;color:#8e8e8e;line-height:16px;height:16px;left:527.3px;letter-spacing:-0.075px;">Search dfu-reflash-amj66</span>
<div class="a" style="left:0px;top:324px;width:725px;height:1px;background:#353535;"></div>
<div class="a" style="left:0px;top:332px;width:725px;height:257px;background:#353535;"></div>
<div class="a" style="left:0px;top:329px;width:9px;height:260px;background:#2a2a2a;"></div>
<div class="a" style="left:9px;top:329px;width:71px;height:4px;background:#313131;"></div>
<div class="a" style="left:0px;top:333px;width:8.5px;height:28px;background:#363636;"></div>
<div class="a" style="left:9px;top:333px;width:5px;height:256px;background:#313131;"></div>
<div class="a" style="left:12px;top:332.8px;width:591.5px;height:24.8px;background:#464646;"></div>
<div class="a" style="left:283px;top:332.8px;width:1px;height:24.8px;background:#3e3e3e;"></div>
<div class="a" style="left:403px;top:332.8px;width:1px;height:24.8px;background:#3e3e3e;"></div>
<div class="a" style="left:523px;top:332.8px;width:1px;height:24.8px;background:#3e3e3e;"></div>
<svg class="a" style="left:149.300px;top:333px" width="9" height="5" viewBox="0 0 9 5"><path d="M0.800 4.300L4.500 0.800 8.200 4.300" fill="none" stroke="#bdbdbd" stroke-width="1.100"/></svg>
<span class="t" style="transform-origin:0 50%;top:337.8px;font-size:12px;color:#d6d6d6;line-height:16px;height:16px;left:29.5px;letter-spacing:-0.172px;">Name</span>
<span class="t" style="transform-origin:0 50%;top:337.8px;font-size:12px;color:#d6d6d6;line-height:16px;height:16px;left:290.4px;letter-spacing:0.021px;">Date modified</span>
<span class="t" style="transform-origin:0 50%;top:337.8px;font-size:12px;color:#d6d6d6;line-height:16px;height:16px;left:410.5px;letter-spacing:-0.350px;transform:scaleX(0.9813);">Type</span>
<span class="t" style="transform-origin:0 50%;top:337.8px;font-size:12px;color:#d6d6d6;line-height:16px;height:16px;left:529.5px;letter-spacing:-0.350px;transform:scaleX(0.9240);">Size</span>
<svg class="a" style="left:31.8px;top:364.9px" width="14" height="17" viewBox="0 0 14 17">
<path d="M0 0.500h9.500v4.500H0z" fill="#ffe9a0"/><path d="M0 2h13.500v14.500H0z" fill="#ffdf80"/>
<path d="M9.500 0.500h3l1 1.500h-4z" fill="#f2c95a"/>
<path d="M10.800 16.500v-5.500l2.700-1.800v7.300z" fill="#e9bf4f"/></svg>
<span class="t" style="transform-origin:0 50%;top:366.7px;font-size:12px;color:#c9c9c9;line-height:16px;height:16px;left:50.4px;letter-spacing:-0.083px;">driver</span>
<span class="t" style="transform-origin:0 50%;top:366.7px;font-size:12px;color:#848484;line-height:16px;height:16px;left:290.4px;letter-spacing:-0.333px;">1/28/2016 2:25 PM</span>
<span class="t" style="transform-origin:0 50%;top:366.7px;font-size:12px;color:#848484;line-height:16px;height:16px;left:410.5px;letter-spacing:-0.129px;">File folder</span>
<svg class="a" style="left:31.8px;top:385.88px" width="14" height="17" viewBox="0 0 14 17">
<path d="M0 0.500h9.500v4.500H0z" fill="#ffe9a0"/><path d="M0 2h13.500v14.500H0z" fill="#ffdf80"/>
<path d="M9.500 0.500h3l1 1.500h-4z" fill="#f2c95a"/>
<path d="M10.800 16.500v-5.500l2.700-1.800v7.300z" fill="#e9bf4f"/></svg>
<span class="t" style="transform-origin:0 50%;top:387.68px;font-size:12px;color:#c9c9c9;line-height:16px;height:16px;left:50.4px;letter-spacing:-0.350px;transform:scaleX(0.9539);">hex</span>
<span class="t" style="transform-origin:0 50%;top:387.68px;font-size:12px;color:#848484;line-height:16px;height:16px;left:290.4px;letter-spacing:-0.347px;">7/13/2016 10:12 PM</span>
<span class="t" style="transform-origin:0 50%;top:387.68px;font-size:12px;color:#848484;line-height:16px;height:16px;left:410.5px;letter-spacing:-0.129px;">File folder</span>
<svg class="a" style="left:31.8px;top:406.85999999999996px" width="14" height="17" viewBox="0 0 14 17">
<path d="M0 0.500h9.500v4.500H0z" fill="#ffe9a0"/><path d="M0 2h13.500v14.500H0z" fill="#ffdf80"/>
<path d="M9.500 0.500h3l1 1.500h-4z" fill="#f2c95a"/>
<path d="M10.800 16.500v-5.500l2.700-1.800v7.300z" fill="#e9bf4f"/></svg>
<span class="t" style="transform-origin:0 50%;top:408.66px;font-size:12px;color:#c9c9c9;line-height:16px;height:16px;left:50.4px;letter-spacing:0.414px;">tool</span>
<span class="t" style="transform-origin:0 50%;top:408.66px;font-size:12px;color:#848484;line-height:16px;height:16px;left:290.4px;letter-spacing:-0.333px;">1/28/2016 2:27 PM</span>
<span class="t" style="transform-origin:0 50%;top:408.66px;font-size:12px;color:#848484;line-height:16px;height:16px;left:410.5px;letter-spacing:-0.129px;">File folder</span>
<svg class="a" style="left:31.8px;top:427.84px" width="14" height="17" viewBox="0 0 14 17">
<path d="M0 0.500h9.500v4.500H0z" fill="#ffe9a0"/><path d="M0 2h13.500v14.500H0z" fill="#ffdf80"/>
<path d="M9.500 0.500h3l1 1.500h-4z" fill="#f2c95a"/>
<path d="M10.800 16.500v-5.500l2.700-1.800v7.300z" fill="#e9bf4f"/></svg>
<span class="t" style="transform-origin:0 50%;top:429.64px;font-size:12px;color:#c9c9c9;line-height:16px;height:16px;left:50.4px;letter-spacing:0.452px;">util</span>
<span class="t" style="transform-origin:0 50%;top:429.64px;font-size:12px;color:#848484;line-height:16px;height:16px;left:290.4px;letter-spacing:-0.333px;">1/28/2016 2:26 PM</span>
<span class="t" style="transform-origin:0 50%;top:429.64px;font-size:12px;color:#848484;line-height:16px;height:16px;left:410.5px;letter-spacing:-0.129px;">File folder</span>
<svg class="a" style="left:29.8px;top:451.52px" width="16.200" height="12.800" viewBox="0 0 17 13" preserveAspectRatio="none">
<rect x="0.500" y="0.500" width="16" height="12" fill="#fbfbfb" stroke="#c4c4c4" stroke-width="1"/><rect x="1" y="1" width="15" height="1.500" fill="#a9adb2"/>
<circle cx="6.500" cy="6.800" r="2.500" fill="none" stroke="#8a949e" stroke-width="1" stroke-dasharray="1.300 .600"/><circle cx="6.500" cy="6.800" r=".700" fill="#8a949e"/>
<circle cx="10.800" cy="9" r="1.800" fill="none" stroke="#7f9cba" stroke-width=".900" stroke-dasharray="1.100 .500"/></svg>
<span class="t" style="transform-origin:0 50%;top:450.62px;font-size:12px;color:#c9c9c9;line-height:16px;height:16px;left:50.4px;letter-spacing:-0.054px;">Amj66.bat</span>
<span class="t" style="transform-origin:0 50%;top:450.62px;font-size:12px;color:#848484;line-height:16px;height:16px;left:290.4px;letter-spacing:-0.347px;">7/13/2016 10:12 PM</span>
<span class="t" style="transform-origin:0 50%;top:450.62px;font-size:12px;color:#848484;line-height:16px;height:16px;left:410.5px;letter-spacing:-0.187px;">Windows Batch File</span>
<span class="t" style="transform-origin:100% 50%;top:450.62px;font-size:12px;color:#848484;line-height:16px;height:16px;right:1052.4px;letter-spacing:-0.350px;transform:scaleX(0.8732);">1 KB</span>
<svg class="a" style="left:29.8px;top:472.5px" width="16.200" height="12.500" viewBox="0 0 17 13" preserveAspectRatio="none">
<rect x="0.500" y="0.500" width="16" height="12" fill="#fbfbfb" stroke="#c9c9c9" stroke-width="1"/><rect x="1" y="1" width="15" height="2" fill="#8e949a"/>
<rect x="4" y="4.500" width="5" height="6" fill="#1f5fb4"/><path d="M10.500 5.500h4M10.500 7.500h4M10.500 9.500h4" stroke="#8a8a8a" stroke-width="1"/></svg>
<span class="t" style="transform-origin:0 50%;top:471.6px;font-size:12px;color:#c9c9c9;line-height:16px;height:16px;left:50.4px;letter-spacing:0.115px;">dfu-programmer.exe</span>
<span class="t" style="transform-origin:0 50%;top:471.6px;font-size:12px;color:#848484;line-height:16px;height:16px;left:290.4px;letter-spacing:-0.242px;">8/18/2015 12:51 AM</span>
<span class="t" style="transform-origin:0 50%;top:471.6px;font-size:12px;color:#848484;line-height:16px;height:16px;left:410.5px;letter-spacing:0.108px;">Application</span>
<span class="t" style="transform-origin:100% 50%;top:471.6px;font-size:12px;color:#848484;line-height:16px;height:16px;right:1052.4px;letter-spacing:-0.350px;transform:scaleX(0.9063);">636 KB</span>
<svg class="a" style="left:30.8px;top:491.97999999999996px" width="15" height="16" viewBox="0 0 15 16">
<path d="M2.500 1.800h11l.8 13.200H0.700z" fill="#eef6f8"/><path d="M3.300 3h9.600l.6 10.800H2.100z" fill="#93cde0"/>
<path d="M3 5h10M2.900 7h10.300M2.800 9h10.500M2.700 11h10.700" stroke="#c7e8f3" stroke-width=".7"/>
<path d="M3.500 0.300v2.600M5.500 0.300v2.600M7.500 0.300v2.600M9.500 0.300v2.600M11.500 0.300v2.600" stroke="#f0f0f0" stroke-width="1"/></svg>
<span class="t" style="transform-origin:0 50%;top:492.58px;font-size:12px;color:#c9c9c9;line-height:16px;height:16px;left:50.4px;letter-spacing:-0.197px;">keymap.eep</span>
<span class="t" style="transform-origin:0 50%;top:492.58px;font-size:12px;color:#848484;line-height:16px;height:16px;left:290.4px;letter-spacing:-0.333px;">1/25/2017 1:14 PM</span>
<span class="t" style="transform-origin:0 50%;top:492.58px;font-size:12px;color:#848484;line-height:16px;height:16px;left:410.5px;letter-spacing:-0.350px;transform:scaleX(0.8883);">EEP File</span>
<span class="t" style="transform-origin:100% 50%;top:492.58px;font-size:12px;color:#848484;line-height:16px;height:16px;right:1052.4px;letter-spacing:-0.350px;transform:scaleX(0.8732);">3 KB</span>
<svg class="a" style="left:30.8px;top:512.9599999999999px" width="15" height="16" viewBox="0 0 15 16">
<path d="M2.500 1.800h11l.8 13.200H0.700z" fill="#eef6f8"/><path d="M3.300 3h9.600l.6 10.800H2.100z" fill="#93cde0"/>
<path d="M3 5h10M2.900 7h10.300M2.800 9h10.500M2.700 11h10.700" stroke="#c7e8f3" stroke-width=".7"/>
<path d="M3.500 0.300v2.600M5.500 0.300v2.600M7.500 0.300v2.600M9.500 0.300v2.600M11.500 0.300v2.600" stroke="#f0f0f0" stroke-width="1"/></svg>
<span class="t" style="transform-origin:0 50%;top:513.56px;font-size:12px;color:#c9c9c9;line-height:16px;height:16px;left:50.4px;letter-spacing:-0.350px;transform:scaleX(0.9687);">README.md</span>
<span class="t" style="transform-origin:0 50%;top:513.56px;font-size:12px;color:#848484;line-height:16px;height:16px;left:290.4px;letter-spacing:-0.282px;">8/1/2014 7:23 PM</span>
<span class="t" style="transform-origin:0 50%;top:513.56px;font-size:12px;color:#848484;line-height:16px;height:16px;left:410.5px;letter-spacing:-0.350px;transform:scaleX(0.8970);">MD File</span>
<span class="t" style="transform-origin:100% 50%;top:513.56px;font-size:12px;color:#848484;line-height:16px;height:16px;right:1052.4px;letter-spacing:-0.350px;transform:scaleX(0.8732);">1 KB</span>
<svg class="a" style="left:29.8px;top:535.44px" width="16.200" height="12.800" viewBox="0 0 17 13" preserveAspectRatio="none">
<rect x="0.500" y="0.500" width="16" height="12" fill="#fbfbfb" stroke="#c4c4c4" stroke-width="1"/><rect x="1" y="1" width="15" height="1.500" fill="#a9adb2"/>
<circle cx="6.500" cy="6.800" r="2.500" fill="none" stroke="#8a949e" stroke-width="1" stroke-dasharray="1.300 .600"/><circle cx="6.500" cy="6.800" r=".700" fill="#8a949e"/>
<circle cx="10.800" cy="9" r="1.800" fill="none" stroke="#7f9cba" stroke-width=".900" stroke-dasharray="1.100 .500"/></svg>
<span class="t" style="transform-origin:0 50%;top:534.54px;font-size:12px;color:#c9c9c9;line-height:16px;height:16px;left:50.4px;letter-spacing:-0.135px;">reflash.bat</span>
<span class="t" style="transform-origin:0 50%;top:534.54px;font-size:12px;color:#848484;line-height:16px;height:16px;left:290.4px;letter-spacing:-0.333px;">9/26/2015 6:35 PM</span>
<span class="t" style="transform-origin:0 50%;top:534.54px;font-size:12px;color:#848484;line-height:16px;height:16px;left:410.5px;letter-spacing:-0.187px;">Windows Batch File</span>
<span class="t" style="transform-origin:100% 50%;top:534.54px;font-size:12px;color:#848484;line-height:16px;height:16px;right:1052.4px;letter-spacing:-0.350px;transform:scaleX(0.8732);">1 KB</span>
<div class="a" style="left:725px;top:297px;width:3px;height:292px;background:#2b2b2b;"></div>

<div class="a" style="left:735px;top:266px;width:913px;height:323px;background:#2b2b2b;"></div>
<div class="a" style="left:739px;top:297px;width:909px;height:292px;background:#000000;"></div>
<svg class="a" style="left:747px;top:275px" width="16" height="13" viewBox="0 0 16 13">
<rect x="0" y="0" width="16" height="13" fill="#d0d0d0"/><rect x="1" y="2.500" width="14" height="9.500" fill="#000"/>
<text x="2" y="10" font-family="Liberation Sans" font-size="6.500" font-weight="bold" fill="#fff">C:\.</text><rect x="10.500" y="9.500" width="3" height="1" fill="#fff"/></svg>
<span class="t" style="transform-origin:0 50%;top:274.7px;font-size:12px;color:#8c8c8c;line-height:16px;height:16px;left:768.6px;letter-spacing:-0.192px;">Select C:\WINDOWS\system32\cmd.exe</span>
<div class="a" style="left:1597px;top:276px;width:10px;height:10px;background:#484848;border-radius:50%;"></div>
<div class="a" style="left:1641px;top:276px;width:10px;height:10px;background:#484848;border-radius:50%;"></div>
<span class="t" style="transform-origin:0 50%;top:314.2px;font-size:13.333px;color:#cccccc;line-height:16px;height:16px;left:739.4px;font-family:'Liberation Mono',monospace;white-space:pre;letter-spacing:0px;">C:\Users\owner\Desktop\KBD66\dfu-reflash-amj66\dfu-reflash-amj66&gt;dfu-programmer atmega32u4 erase --force</span>
<span class="t" style="transform-origin:0 50%;top:330.2px;font-size:13.333px;color:#cccccc;line-height:16px;height:16px;left:739.4px;font-family:'Liberation Mono',monospace;white-space:pre;letter-spacing:0px;">Erasing flash...  Success</span>
<span class="t" style="transform-origin:0 50%;top:346.2px;font-size:13.333px;color:#cccccc;line-height:16px;height:16px;left:739.4px;font-family:'Liberation Mono',monospace;white-space:pre;letter-spacing:0px;">Checking memory from 0x0 to 0x6FFF...  Empty.</span>
<span class="t" style="transform-origin:0 50%;top:378.2px;font-size:13.333px;color:#cccccc;line-height:16px;height:16px;left:739.4px;font-family:'Liberation Mono',monospace;white-space:pre;letter-spacing:0px;">C:\Users\owner\Desktop\KBD66\dfu-reflash-amj66\dfu-reflash-amj66&gt;dfu-programmer atmega32u4 flash hex\Amj66.hex</span>
<span class="t" style="transform-origin:0 50%;top:394.2px;font-size:13.333px;color:#cccccc;line-height:16px;height:16px;left:739.4px;font-family:'Liberation Mono',monospace;white-space:pre;letter-spacing:0px;">Checking memory from 0x0 to 0x43FF...  Empty.</span>
<span class="t" style="transform-origin:0 50%;top:410.2px;font-size:13.333px;color:#cccccc;line-height:16px;height:16px;left:739.4px;font-family:'Liberation Mono',monospace;white-space:pre;letter-spacing:0px;">0%                            100%  Programming 0x4400 bytes...</span>
<span class="t" style="transform-origin:0 50%;top:426.2px;font-size:13.333px;color:#cccccc;line-height:16px;height:16px;left:739.4px;font-family:'Liberation Mono',monospace;white-space:pre;letter-spacing:0px;">[&gt;&gt;&gt;&gt;&gt;&gt;&gt;&gt;&gt;&gt;&gt;&gt;&gt;&gt;&gt;&gt;&gt;&gt;&gt;&gt;&gt;&gt;&gt;&gt;&gt;&gt;&gt;&gt;&gt;&gt;&gt;&gt;]  Success</span>
<span class="t" style="transform-origin:0 50%;top:442.2px;font-size:13.333px;color:#cccccc;line-height:16px;height:16px;left:739.4px;font-family:'Liberation Mono',monospace;white-space:pre;letter-spacing:0px;">0%                            100%  Reading 0x7000 bytes...</span>
<span class="t" style="transform-origin:0 50%;top:458.2px;font-size:13.333px;color:#cccccc;line-height:16px;height:16px;left:739.4px;font-family:'Liberation Mono',monospace;white-space:pre;letter-spacing:0px;">[&gt;&gt;&gt;&gt;&gt;&gt;&gt;&gt;&gt;&gt;&gt;&gt;&gt;&gt;&gt;&gt;&gt;&gt;&gt;&gt;&gt;&gt;&gt;&gt;&gt;&gt;&gt;&gt;&gt;&gt;&gt;&gt;]  Success</span>
<span class="t" style="transform-origin:0 50%;top:474.2px;font-size:13.333px;color:#cccccc;line-height:16px;height:16px;left:739.4px;font-family:'Liberation Mono',monospace;white-space:pre;letter-spacing:0px;">Validating...  Success</span>
<span class="t" style="transform-origin:0 50%;top:490.2px;font-size:13.333px;color:#cccccc;line-height:16px;height:16px;left:739.4px;font-family:'Liberation Mono',monospace;white-space:pre;letter-spacing:0px;">0x4400 bytes written into 0x7000 bytes memory (60.71%).</span>
<span class="t" style="transform-origin:0 50%;top:506.2px;font-size:13.333px;color:#cccccc;line-height:16px;height:16px;left:739.4px;font-family:'Liberation Mono',monospace;white-space:pre;letter-spacing:0px;">Press any key to continue . . .</span>

</div>
</body>
</html>
